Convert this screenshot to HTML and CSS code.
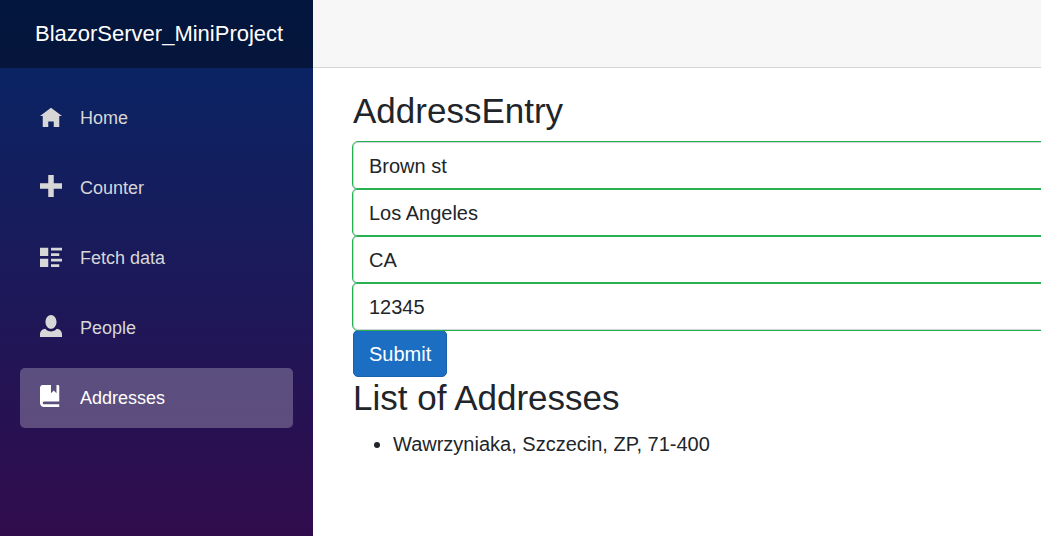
FILE: index.html
```html
<!DOCTYPE html>
<html lang="en">
<head>
<meta charset="utf-8">
<meta name="viewport" content="width=device-width, initial-scale=1">
<title>BlazorServer_MiniProject</title>
<link rel="stylesheet" href="styles.css">
</head>
<body>
<div class="page">
  <aside class="sidebar">
    <div class="brand-row"><a class="brand" href="#">BlazorServer_MiniProject</a></div>
    <nav class="nav">
      <a class="nav-link" href="#">
        <svg class="icon" viewBox="0 0 8 8" aria-hidden="true"><path d="M4 1l-4 3h1v4h2v-2h2v2h2v-4.03l1 .03-4-3z"/></svg>Home</a>
      <a class="nav-link" href="#">
        <svg class="icon" viewBox="0 0 8 8" aria-hidden="true"><path d="M3 0v3h-3v2h3v3h2v-3h3v-2h-3v-3h-2z"/></svg>Counter</a>
      <a class="nav-link" href="#">
        <svg class="icon" viewBox="0 0 8 8" aria-hidden="true"><path d="M0 1v3h3v-3h-3zm4 0v1h4v-1h-4zm0 2v1h3v-1h-3zm-4 2v3h3v-3h-3zm4 0v1h4v-1h-4zm0 2v1h3v-1h-3z"/></svg>Fetch data</a>
      <a class="nav-link" href="#">
        <svg class="icon" viewBox="0 0 8 8" aria-hidden="true"><path d="M4 0c-1.1 0-2 1.12-2 2.5s.9 2.5 2 2.5 2-1.12 2-2.5-.9-2.5-2-2.5zm-2.09 5c-1.06.05-1.91.92-1.91 2v1h8v-1c0-1.08-.84-1.95-1.91-2-.54.61-1.28 1-2.09 1-.81 0-1.55-.39-2.09-1z"/></svg>People</a>
      <a class="nav-link active" href="#" aria-current="page">
        <svg class="icon" viewBox="0 0 8 8" aria-hidden="true"><path d="M1 0c-.07 0-.13.01-.19.03-.39.08-.7.39-.78.78-.03.06-.03.12-.03.19v5.5c0 .83.67 1.5 1.5 1.5h5.5v-1h-5.5c-.28 0-.5-.22-.5-.5s.22-.5.5-.5h5.5v-5.5c0-.28-.22-.5-.5-.5h-.5v3l-1-1-1 1v-3h-3z"/></svg>Addresses</a>
    </nav>
  </aside>
  <div class="main">
    <header class="top-row"></header>
    <main class="content">
      <h3 class="heading">AddressEntry</h3>
      <form class="form">
        <input class="field" type="text" aria-label="Street address" value="Brown st">
        <input class="field" type="text" aria-label="City" value="Los Angeles">
        <input class="field" type="text" aria-label="State" value="CA">
        <input class="field" type="text" aria-label="Zip code" value="12345">
        <button class="submit" type="button">Submit</button>
      </form>
      <h3 class="heading">List of Addresses</h3>
      <ul class="list">
        <li>Wawrzyniaka, Szczecin, ZP, 71-400</li>
      </ul>
    </main>
  </div>
</div>
</body>
</html>
```
FILE: styles.css
```css
* {
  box-sizing: border-box;
}

body {
  margin: 0;
  background: #fff;
  color: #212529;
  font-family: "Liberation Sans", Arial, sans-serif;
  font-size: 20px;
  line-height: 30px;
}

.page {
  display: flex;
  min-height: 100vh;
}

.sidebar {
  flex: 0 0 313px;
  background: linear-gradient(180deg, #052767 0, #3a0647 650px);
}

.brand-row {
  display: flex;
  align-items: center;
  height: 68px;
  padding-left: 35px;
  background: rgba(0, 0, 0, 0.4);
}

.brand {
  color: #fff;
  font-size: 22px;
  text-decoration: none;
}

.nav {
  display: flex;
  flex-direction: column;
  gap: 10px;
  padding: 20px;
}

.nav-link {
  display: flex;
  align-items: center;
  gap: 18px;
  height: 60px;
  padding: 0 20px;
  border-radius: 5px;
  color: #d7d7d7;
  font-size: 18px;
  text-decoration: none;
}

.nav-link.active {
  background: rgba(255, 255, 255, 0.25);
  color: #fff;
}

.icon {
  width: 22px;
  height: 22px;
  margin-bottom: 4px;
  fill: currentColor;
}

.main {
  flex: 1;
  min-width: 0;
}

.top-row {
  height: 68px;
  border-bottom: 1px solid #d6d5d5;
  background: #f7f7f7;
}

.content {
  padding: 22px 0 22px 40px;
}

.heading {
  margin: 0 0 10px;
  font-size: 35px;
  font-weight: 500;
  line-height: 42px;
}

.field {
  display: block;
  width: 100%;
  height: 47px;
  padding: 8px 15px 6px;
  border: 1px solid #ced4da;
  border-right: 0;
  border-radius: 5px 0 0 5px;
  outline: 1px solid #26b050;
  background: #fff;
  color: #212529;
  font: inherit;
}

.submit {
  display: block;
  height: 47px;
  padding: 0 15px;
  border: 1px solid #1861ac;
  border-radius: 5px;
  background: #1b6ec2;
  color: #fff;
  font: inherit;
}

.list {
  margin: 0;
  padding-left: 40px;
}
```
